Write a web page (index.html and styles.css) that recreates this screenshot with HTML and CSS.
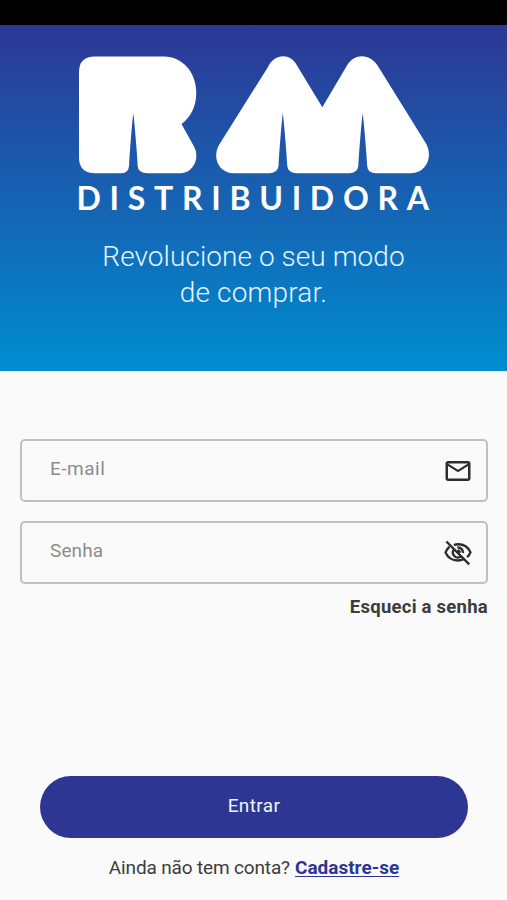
FILE: index.html
```html
<!DOCTYPE html>
<html lang="pt-BR">
<head>
<meta charset="utf-8">
<meta name="viewport" content="width=device-width, initial-scale=1">
<title>RM Distribuidora</title>
<link rel="stylesheet" href="styles.css">
</head>
<body>
<div class="status-bar"></div>
<header class="hero">
  <svg class="logo" viewBox="79 56 350 158" width="350" height="158" role="img" aria-label="RM Distribuidora">
    <path d="M95 56.500H164C182 56.500 196.300 72 196.300 92.500C196.300 106 191 117 181.500 124L194 146.500C200.500 158 193 173.200 180.500 173.200H147.500Q138 173.200 137.700 166C136.800 150 134.800 126 133.300 113C131.800 126 129.900 150 129 166Q128.500 173.200 121.500 173.200H95Q79 173.200 79 157.500V72Q79 56.500 95 56.500Z"/>
    <path d="M268 67C274.500 53 290.500 53 297 65.500L322.300 107.300L347 65.500C354.500 53 370.500 53 378.500 67L426 143.500C433.500 157 426 173.300 411 173.300H376Q367.500 173.300 367.200 166C366.300 150 364.200 126 362.700 113C361.200 126 359.200 150 358.300 166Q357.500 173.300 349 173.300H297Q288 173.300 287.300 166C286.400 150 284.300 126 282.800 113C281.300 126 279.400 150 278.500 166Q277.500 173.300 269 173.300H234C218.500 173.300 212 157.500 219 145Z"/>
    <text class="wordmark" x="76.500" y="210" textLength="352.500">DISTRIBUIDORA</text>
  </svg>
  <p class="tagline"><span class="line-one">Revolucione o seu modo</span><br><span class="line-two">de comprar.</span></p>
</header>
<main class="login">
  <label class="field">
    <span class="placeholder email">E-mail</span>
    <svg class="icon" viewBox="0 0 24 24"><path d="M22 6c0-1.100-.9-2-2-2H4c-1.100 0-2 .9-2 2v12c0 1.100.9 2 2 2h16c1.100 0 2-.9 2-2V6zm-2 0-8 5-8-5h16zm0 12H4V8l8 5 8-5v10z"/></svg>
  </label>
  <label class="field">
    <span class="placeholder password">Senha</span>
    <svg class="icon" viewBox="0 0 24 24"><g fill="none" stroke="currentColor" stroke-width="1.900"><path d="M2.700 2.800 21 21.100M8.700 5.600Q10.200 5 12 5C16.500 5 20.300 7.500 22 11.500Q21.100 13.700 19.300 15.300M5.200 7Q3.100 8.700 2 11.500C3.700 15.500 7.500 18 12 18Q14.500 18 16.700 17M8.500 9.500A4 4 0 0 0 14 15M11.500 7.600A4 4 0 0 1 16 12M11.800 9.500 14 11.700"/></g></svg>
  </label>
  <a class="forgot"><span>Esqueci a senha</span></a>
  <button class="submit" type="button">Entrar</button>
  <p class="signup"><span class="question">Ainda não tem conta?</span><a class="register">Cadastre-se</a></p>
</main>
</body>
</html>
```
FILE: styles.css
```css
* { box-sizing: border-box; }
body {
  margin: 0;
  height: 900px;
  background: #fafafa;
  color: #3c3c3d;
  font-family: Roboto, "Liberation Sans", sans-serif;
  overflow: hidden;
}
.status-bar { height: 25px; background: #000; }
.hero {
  height: 346px;
  padding-top: 31px;
  background: linear-gradient(#2d3795, #008dcf);
  color: #fff;
  text-align: center;
}
.logo { display: block; width: 350px; height: 158px; margin-left: 79px; fill: #fff; overflow: visible; }
.wordmark { font-family: Lato, sans-serif; font-size: 32px; font-weight: 700; }
.tagline { margin: 25px 0 0; font-size: 28px; font-weight: 300; line-height: 36px; color: #e4f4ff; }
.line-one { letter-spacing: .06px; }
.line-two { letter-spacing: .15px; }
.login { display: flex; flex-direction: column; padding: 68px 19px 0 20px; }
.field {
  display: flex;
  align-items: center;
  justify-content: space-between;
  height: 63px;
  margin-bottom: 19px;
  padding: 0 13px 0 28px;
  border: 2px solid #c0c0c0;
  border-radius: 5px;
}
.placeholder { padding-bottom: 3px; font-size: 19px; line-height: 24px; color: #8c8c8c; }
.email { letter-spacing: .5px; }
.password { letter-spacing: .1px; }
.icon { width: 30px; height: 30px; fill: #2d2d2e; color: #2d2d2e; }
.forgot { align-self: flex-end; margin-top: -8px; font-size: 18.500px; font-weight: 700; line-height: 24px; letter-spacing: .25px; }
.submit {
  height: 62px;
  margin: 157px 20px 0;
  padding: 0 0 2px;
  border: 0;
  border-radius: 31px;
  background: #2d3692;
  color: #f1f3ff;
  font: 400 19px/24px Roboto, sans-serif;
  letter-spacing: .4px;
}
.signup { display: flex; justify-content: center; gap: 5px; margin: 18px 0 0; font-size: 19px; line-height: 24px; }
.question { letter-spacing: -.15px; }
.register { color: #2d3692; font-weight: 700; text-decoration: underline; text-decoration-thickness: 1px; text-underline-offset: 2px; }
```
